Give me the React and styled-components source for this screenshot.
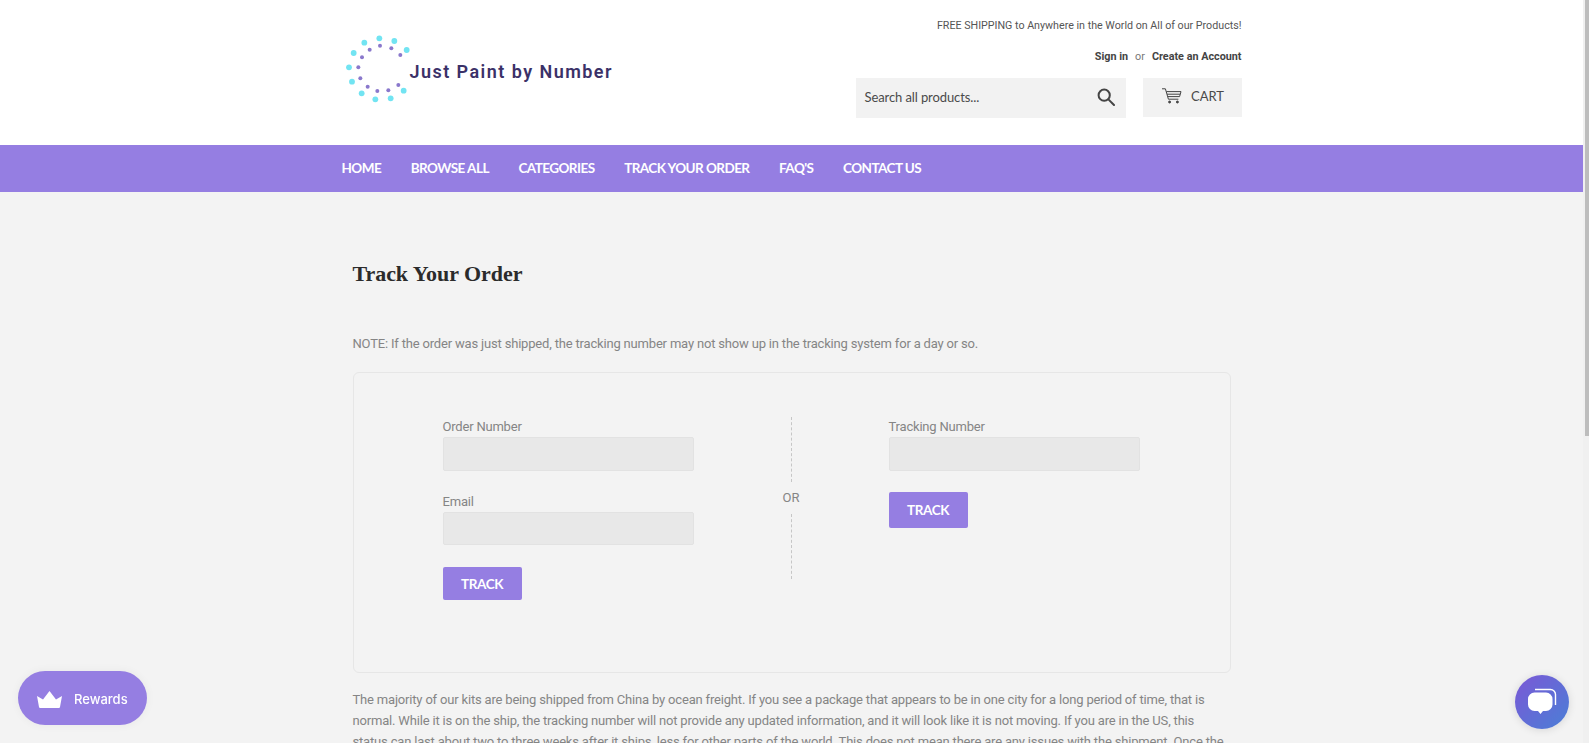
import React from 'react';
import styled, { createGlobalStyle } from 'styled-components';

const purple = '#957ee2';

const GlobalStyle = createGlobalStyle`
  html, body {
    margin: 0;
    padding: 0;
    background: #f3f3f3;
  }
  body {
    font-family: Roboto, "Liberation Sans", sans-serif;
    color: #858585;
  }
`;

const Page = styled.div`
  margin-right: 6px;
`;

const ScrollTrack = styled.div`
  position: fixed;
  top: 0;
  right: 0;
  bottom: 0;
  width: 6px;
  background: #f0f0f0;
`;

const ScrollThumb = styled.div`
  width: 4px;
  height: 436px;
  margin-left: 2px;
  background: #bdbdbd;
`;

const Header = styled.header`
  background: #fff;
  height: 145px;
`;

const HeaderInner = styled.div`
  width: 900px;
  height: 100%;
  margin: 0 auto;
  display: flex;
  justify-content: space-between;
`;

const Logo = styled.a`
  display: flex;
  align-items: flex-start;
  padding: 29px 0 0 1px;
`;

const LogoName = styled.span`
  margin: 33px 0 0 -3px;
  font-size: 18px;
  font-weight: 600;
  letter-spacing: 1.45px;
  line-height: 20px;
  color: #3b3168;
  white-space: nowrap;
`;

const HeaderRight = styled.div`
  display: flex;
  flex-direction: column;
  align-items: flex-end;
  padding-top: 18px;
`;

const Shipping = styled.p`
  margin: 0;
  font-size: 10.7px;
  line-height: 16px;
  color: #555;
`;

const Account = styled.p`
  margin: 15px 0 0;
  font-size: 10.8px;
  line-height: 16px;
  color: #777;
`;

const AccountLink = styled.a`
  font-weight: 700;
  color: #444;
`;

const Or = styled.span`
  margin: 0 7px;
`;

const Tools = styled.div`
  display: flex;
  gap: 17px;
  margin-top: 13px;
`;

const Search = styled.div`
  width: 270px;
  height: 40px;
  box-sizing: border-box;
  padding: 0 11px 2px 9px;
  background: #f2f2f2;
  display: flex;
  align-items: center;
  justify-content: space-between;
  font-family: Lato, sans-serif;
  font-size: 13px;
  letter-spacing: -0.1px;
  color: #4a4a4a;
`;

const Cart = styled.a`
  width: 99px;
  height: 39px;
  box-sizing: border-box;
  padding: 0 0 3px 2px;
  background: #f2f2f2;
  display: flex;
  align-items: center;
  justify-content: center;
  gap: 9px;
  font-family: Lato, sans-serif;
  font-size: 13px;
  color: #4a4a4a;
`;

const NavBar = styled.nav`
  background: ${purple};
  height: 47px;
`;

const NavList = styled.div`
  width: 900px;
  height: 100%;
  box-sizing: border-box;
  margin: 0 auto;
  padding-bottom: 2px;
  display: flex;
  align-items: center;
  gap: 29.6px;
`;

const NavLink = styled.a`
  font-family: Lato, sans-serif;
  font-size: 13.5px;
  font-weight: 700;
  letter-spacing: -0.55px;
  color: #fff;
  text-transform: uppercase;
  white-space: nowrap;
`;

const Main = styled.main`
  width: 878px;
  margin: 0 auto;
  padding-top: 67px;
`;

const Title = styled.h1`
  margin: 0;
  font-family: "Liberation Serif", serif;
  font-size: 22px;
  font-weight: 700;
  letter-spacing: -0.05px;
  line-height: 30px;
  color: #2b2b2b;
`;

const Text = styled.p`
  margin: ${({ $top }) => $top}px 0 0;
  font-size: 13px;
  letter-spacing: -0.18px;
  line-height: 21px;
  color: #858585;
`;

const TrackBox = styled.section`
  box-sizing: border-box;
  height: 301px;
  margin-top: 18px;
  padding: 44px 90px 0 89px;
  border: 1px solid #e6e6e6;
  border-radius: 6px;
  display: flex;
  justify-content: space-between;
`;

const Column = styled.div`
  width: 251px;
  display: flex;
  flex-direction: column;
  align-items: flex-start;
`;

const Field = styled.label`
  width: 100%;
  display: block;
  margin-bottom: ${({ $gap }) => $gap}px;
  font-size: 13px;
  letter-spacing: -0.2px;
  line-height: 20px;
  color: #858585;
`;

const Input = styled.input`
  display: block;
  width: 100%;
  height: 33.6px;
  box-sizing: border-box;
  background: #e8e8e8;
  border: 1px solid #e2e2e2;
  border-radius: 2px;
`;

const TrackButton = styled.button`
  width: 79px;
  height: ${({ $tall }) => ($tall ? 36 : 33)}px;
  padding: 0;
  border: 0;
  border-radius: 2px;
  background: ${purple};
  font-family: Lato, sans-serif;
  font-size: 13.5px;
  font-weight: 700;
  letter-spacing: -0.4px;
  color: #fff;
`;

const Divider = styled.div`
  height: 162px;
  display: flex;
  flex-direction: column;
  align-items: center;
  font-size: 13px;
  color: #858585;
`;

const DashLine = styled.span`
  flex: 1;
  border-left: 1px dashed #c6c6c6;
`;

const OrLabel = styled.span`
  height: 32px;
  line-height: 32px;
`;

const Rewards = styled.button`
  position: fixed;
  left: 18px;
  bottom: 18px;
  width: 129px;
  height: 54px;
  padding: 2px 0 0 19px;
  border: 0;
  border-radius: 27px;
  background: ${purple};
  box-shadow: 0 0 10px rgba(0, 0, 0, 0.05);
  display: flex;
  align-items: center;
  gap: 12px;
  font-family: Inter, sans-serif;
  font-size: 13px;
  font-weight: 500;
  color: #fff;
`;

const Chat = styled.div`
  position: fixed;
  left: 1515px;
  top: 675px;
  width: 54px;
  height: 54px;
  border-radius: 50%;
  background: linear-gradient(135deg, #7b58d6, #4a7fd6);
  box-shadow: 0 1px 8px rgba(0, 0, 0, 0.12);
`;

const cyanDots = [[145, 55], [100, 68], [190, 63], [227, 90], [68, 99], [54, 142], [63, 185], [92, 220], [133, 238], [179, 235], [218, 212]];
const purpleDots = [[147, 77], [116, 89], [181, 85], [208, 105], [93, 112], [82, 142], [88, 175], [110, 200], [139, 213], [172, 211], [202, 195]];

const LogoMark = () => (
  <svg width="70" height="76" viewBox="0 0 70 76">
    {cyanDots.map(([x, y]) => (
      <circle key={`${x}-${y}`} cx={x / 3 - 12} cy={y / 3 - 9} r="2.9" fill="#72e4f2" />
    ))}
    {purpleDots.map(([x, y]) => (
      <circle key={`${x}-${y}`} cx={x / 3 - 12} cy={y / 3 - 9} r="2" fill="#8a78cc" />
    ))}
  </svg>
);

const SearchIcon = () => (
  <svg width="18" height="18" viewBox="0 0 18 18" fill="none" stroke="#444" strokeWidth="2">
    <circle cx="7.2" cy="7.2" r="5.6" />
    <path d="M11.4 11.4l5.6 5.6" strokeLinecap="round" />
  </svg>
);

const CartIcon = () => (
  <svg width="20" height="16" viewBox="0 0 20 16" fill="none" stroke="#444" strokeWidth="1">
    <path d="M0 .8h3.4L6.4 11.2h10" />
    <path d="M4.4 3.6h14.6l-1.4 5H6" />
    <path d="M5 6.2h13" />
    <circle cx="7.6" cy="14" r="1" fill="#444" />
    <circle cx="15.4" cy="14" r="1" fill="#444" />
  </svg>
);

const CrownIcon = () => (
  <svg width="25" height="17" viewBox="0 0 25 17" fill="#fff">
    <path d="M0 5l6 3.6L12.5 0 19 8.6 25 5l-2 11a1.2 1.2 0 0 1-1.2 1H3.2A1.2 1.2 0 0 1 2 16z" />
  </svg>
);

const ChatIcon = () => (
  <svg width="54" height="54" viewBox="0 0 54 54">
    <path d="M20 14.5h15.5a5 5 0 0 1 5 5V30" fill="none" stroke="#fff" strokeWidth="1.4" />
    <path d="M19.5 17.5h11.5a6.5 6.5 0 0 1 6.5 6.5v5.5a6.5 6.5 0 0 1-6.5 6.5h-3l-2.5 3-2.5-3h-3.5a6.5 6.5 0 0 1-6.5-6.5V24a6.5 6.5 0 0 1 6.5-6.5z" fill="#fff" />
  </svg>
);

const navItems = ['Home', 'Browse All', 'Categories', 'Track Your Order', "FAQ's", 'Contact Us'];

export default function App() {
  return (
    <Page>
      <GlobalStyle />
      <Header>
        <HeaderInner>
          <Logo>
            <LogoMark />
            <LogoName>Just Paint by Number</LogoName>
          </Logo>
          <HeaderRight>
            <Shipping>FREE SHIPPING to Anywhere in the World on All of our Products!</Shipping>
            <Account>
              <AccountLink>Sign in</AccountLink>
              <Or>or</Or>
              <AccountLink>Create an Account</AccountLink>
            </Account>
            <Tools>
              <Search>
                Search all products...
                <SearchIcon />
              </Search>
              <Cart>
                <CartIcon />
                CART
              </Cart>
            </Tools>
          </HeaderRight>
        </HeaderInner>
      </Header>
      <NavBar>
        <NavList>
          {navItems.map((item) => (
            <NavLink key={item}>{item}</NavLink>
          ))}
        </NavList>
      </NavBar>
      <Main>
        <Title>Track Your Order</Title>
        <Text $top={44}>
          NOTE: If the order was just shipped, the tracking number may not show up in the tracking system for a day or so.
        </Text>
        <TrackBox>
          <Column>
            <Field $gap={21}>
              Order Number
              <Input />
            </Field>
            <Field $gap={22}>
              Email
              <Input />
            </Field>
            <TrackButton>TRACK</TrackButton>
          </Column>
          <Divider>
            <DashLine />
            <OrLabel>OR</OrLabel>
            <DashLine />
          </Divider>
          <Column>
            <Field $gap={21}>
              Tracking Number
              <Input />
            </Field>
            <TrackButton $tall>TRACK</TrackButton>
          </Column>
        </TrackBox>
        <Text $top={16}>
          The majority of our kits are being shipped from China by ocean freight. If you see a package that appears to be in one city for a long period of time, that is normal. While it is on the ship, the tracking number will not provide any updated information, and it will look like it is not moving. If you are in the US, this status can last about two to three weeks after it ships, less for other parts of the world. This does not mean there are any issues with the shipment. Once the
        </Text>
      </Main>
      <Rewards>
        <CrownIcon />
        Rewards
      </Rewards>
      <Chat>
        <ChatIcon />
      </Chat>
      <ScrollTrack>
        <ScrollThumb />
      </ScrollTrack>
    </Page>
  );
}
